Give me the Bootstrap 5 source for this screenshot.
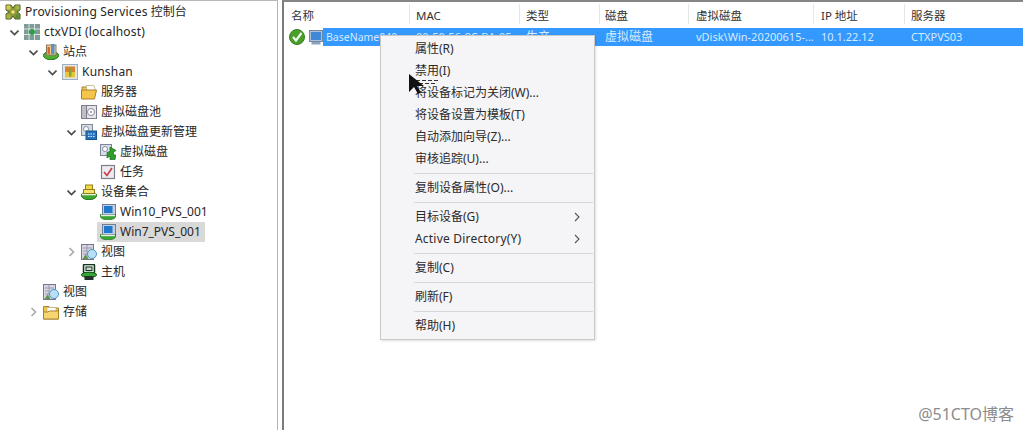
<!DOCTYPE html>
<html lang="zh-CN">
<head>
<meta charset="utf-8">
<title>Provisioning Services 控制台</title>
<link href="https://cdn.jsdelivr.net/npm/bootstrap@5.3.0/dist/css/bootstrap.min.css" rel="stylesheet">
<style>
html,body{height:430px;overflow:hidden;background:#fff}
body{font-family:"Noto Sans","Noto Sans CJK SC",sans-serif;font-size:12px;color:#262626;line-height:20px;position:relative}
.app-shell{height:430px}
.tree-pane{width:278px;border-right:1px solid #b4b4b4;border-top:1px solid #b8b8b8;padding-top:1px}
.split-gap{width:4px}
.detail-pane{flex:1;border-left:2px solid #7c7c7c;border-top:2px solid #868686;min-width:0}
.tree-row{height:20px}
.lat-text{letter-spacing:.2px}
.lv0{padding-left:5px}.lv1{padding-left:10px}.lv2{padding-left:29px}.lv3{padding-left:48px}.lv4{padding-left:67px}.lv5{padding-left:86px}
.tog{width:14px;height:20px;flex:none;padding-right:5px}
.tico{width:16px;height:16px;flex:none;margin-right:4px}
.sel-node{background:#d9d9d9;margin-left:-3px;padding:0 4px 0 3px;height:20px}
.head-row{height:24px;padding-top:2px;font-size:11.5px;color:#333}
.cell{flex:none;padding-left:6px;white-space:nowrap;overflow:hidden}
.head-row .cell{border-right:1px solid #e6e6e6;height:20px;line-height:24px}
.c1{width:126px;padding-left:7px}.c2{width:110px}.c3{width:80px}.c4{width:89px;padding-left:5px}.c5{width:125px;padding-left:7px}.c6{width:91px;padding-left:7px}.c7{width:118px}
.head-row .c7{border-right:0}
.data-row{height:18px;line-height:18px;margin-top:2px;font-size:11px}
.data-row .c1{padding:0;display:flex;align-items:center;overflow:visible}
.stat-ico{width:16px;height:16px;margin:0 4px 0 5px}
.dev-ico{width:14px;height:15px}
.row-name{background:#3399ff;color:#d7eaff;flex:1;height:18px;padding-left:3px;font-size:10.5px}
.blue-cell{background:#3399ff;color:#d7eaff;height:18px}
.cjk-cell{font-size:12px}
.ctx-menu{position:absolute;left:380px;top:35px;width:215px;margin:0;padding:2px 0 2px;background:#f5f4f6;border:1px solid #c9c9c9;border-radius:0;font-size:12px;color:#2b2b2b;display:block;min-width:0;box-shadow:1px 1px 2px rgba(0,0,0,.12)}
.ctx-menu .dropdown-item{height:22px;line-height:22px;padding:0 14px 0 34px;font-size:12px;color:#2b2b2b;background:transparent;display:flex;justify-content:space-between;align-items:center}
.ctx-menu .dropdown-divider{margin:3px 1px 3px 33px;border-top:1px solid #d7d7d7;opacity:1}
.sub-arrow{width:6px;height:10px}
.cursor-mark{position:absolute;left:408px;top:73px;width:34px;height:24px;pointer-events:none;z-index:1001}
.watermark{position:absolute;right:9px;top:403px;font-size:16px;line-height:22px;color:#8c8c8c;background:#fff;padding:0 0 0 1px}
</style>
</head>
<body>
<svg width="0" height="0" class="position-absolute">
<defs>
<symbol id="down" viewBox="0 0 9 20"><path d="M0.5 8.5 4.5 12.5 8.5 8.5" fill="none" stroke="#4a4a4a" stroke-width="1.6"/></symbol>
<symbol id="right" viewBox="0 0 9 20"><path d="M2.5 6 6.5 10 2.5 14" fill="none" stroke="#a8a8a8" stroke-width="1.6"/></symbol>
<symbol id="i-console" viewBox="0 0 16 16"><path d="M1 1h5l2 3 2-3h5v5l-3 2 3 2v5h-5l-2-3-2 3H1v-5l3-2-3-2z" fill="#8a9a3a" stroke="#4f5f22"/><circle cx="8" cy="8" r="1.8" fill="#f1e27a"/><rect x="1.5" y="1.5" width="4" height="4" fill="#d4cc5a"/><rect x="10.5" y="10.5" width="4" height="4" fill="#5f8a3a"/><rect x="10.5" y="1.5" width="4" height="4" fill="#a8b24a"/><rect x="1.5" y="10.5" width="4" height="4" fill="#a8b24a"/></symbol>
<symbol id="i-farm" viewBox="0 0 16 16"><rect x="0" y="0" width="16" height="16" fill="#7f9c98"/><path d="M0 5h16M0 10.500h16M5 0v16M10.500 0v16" stroke="#d8e2e0"/><path d="M5 8h6M8 5v6" stroke="#2f9e4a" stroke-width="3"/></symbol>
<symbol id="i-site" viewBox="0 0 16 16"><ellipse cx="8" cy="11.500" rx="7.700" ry="4.200" fill="#4fae32" stroke="#2c7a1e"/><rect x="3.500" y="1" width="9.500" height="10" fill="#ecd08a" stroke="#8b7a5a"/><rect x="4.500" y="3" width="2.500" height="7" fill="#d9662e"/><rect x="8" y="0" width="3.500" height="10" fill="#5a8fd0"/></symbol>
<symbol id="i-local" viewBox="0 0 16 16"><rect x="0.500" y="0.500" width="15" height="15" fill="#dfe6ec" stroke="#9fb0bc"/><rect x="3" y="2.500" width="10" height="5.500" fill="#d9822e"/><rect x="3" y="8" width="10" height="5.500" fill="#e7c63c"/><rect x="7" y="4.500" width="2.500" height="8" fill="#7fa83c"/></symbol>
<symbol id="i-folder" viewBox="0 0 16 16"><path d="M1 3h5l1 1.500h5V7H1z" fill="#f0c860" stroke="#a8822a"/><path d="M5 1.500h8l1.500 5H6z" fill="#fff" stroke="#b8a878" stroke-width=".7"/><path d="M0.500 15V6h15l-2 9z" fill="#f4c548" stroke="#a8822a"/></symbol>
<symbol id="i-pool" viewBox="0 0 16 16"><rect x="0.500" y="1.500" width="15" height="13" fill="#e4e4ea" stroke="#7f7f8c"/><rect x="0.500" y="1.500" width="5" height="13" fill="#bcbcca" stroke="#7f7f8c"/><circle cx="10" cy="8" r="3.500" fill="#fff" stroke="#8a8a98"/><circle cx="10" cy="8" r="1" fill="#8a8a98"/></symbol>
<symbol id="i-update" viewBox="0 0 16 16"><rect x="0.500" y="0.500" width="11" height="11" fill="#d5dbe4" stroke="#7f8a98"/><circle cx="5" cy="5" r="2.500" fill="#fff" stroke="#8a96a0"/><rect x="5" y="7" width="10.500" height="8.500" fill="#2373c0" stroke="#1a5390"/><path d="M7 10h7M7 12.500h7" stroke="#dfeaf5" stroke-dasharray="1.500 1"/></symbol>
<symbol id="i-vdisk" viewBox="0 0 16 16"><rect x="0.500" y="0.500" width="11" height="11" fill="#d8dce6" stroke="#7f8598"/><circle cx="5" cy="5" r="2.500" fill="#fff" stroke="#8a90a0"/><path d="M10 3l6 3.500-2.500 1.500v3H16l-1 4.500h-5v-3.500L7 14V8.500l3-1z" fill="#2f9e2e" stroke="#166e18" stroke-width=".7"/></symbol>
<symbol id="i-task" viewBox="0 0 16 16"><rect x="1.500" y="1.500" width="13" height="13" fill="#ececf0" stroke="#7f7f88" stroke-width="1.200"/><path d="M4 8l3 3.500L12 4" fill="none" stroke="#c8384a" stroke-width="1.600"/></symbol>
<symbol id="i-coll" viewBox="0 0 16 16"><ellipse cx="8" cy="11.500" rx="7.700" ry="4.200" fill="#3fa52e" stroke="#24761f"/><rect x="1" y="9.500" width="14" height="1.800" fill="#e3eed8"/><rect x="4.500" y="1" width="7" height="5.500" fill="#f2d93f" stroke="#8f7f22"/><rect x="2.500" y="5.500" width="11" height="4" fill="#f6e46a" stroke="#8f7f22"/></symbol>
<symbol id="i-dev" viewBox="0 0 16 16"><rect x="2.500" y="0.500" width="13" height="10.500" fill="#c3cede" stroke="#6f7e96"/><rect x="4" y="2" width="8.500" height="7" fill="#2277cf"/><path d="M0.300 10.500c2 1 13 1 15.400 0v1.500c0 2.500-3.500 3.800-7.700 3.800S0.300 14.500 0.300 12z" fill="#37a632" stroke="#1f6e1c" stroke-width=".7"/><rect x="1" y="10.800" width="14" height="1.400" fill="#e6f0e2"/></symbol>
<symbol id="i-view" viewBox="0 0 16 16"><rect x="0.500" y="0.500" width="12" height="15" fill="#d6d6e2" stroke="#75758c"/><path d="M2 4h9M2 7h4M2 10h4M6 1v14" stroke="#9a9ab0"/><path d="M1.500 15l3-4.500 3 4.500z" fill="#5f9440"/><circle cx="11" cy="10" r="4.500" fill="#b8dff5" stroke="#4c95c2"/></symbol>
<symbol id="i-host" viewBox="0 0 16 16"><rect x="2.500" y="0.500" width="11" height="8.500" rx="1" fill="#e8efe8" stroke="#12331c" stroke-width="1.500"/><rect x="5" y="3" width="6" height="3.500" fill="#cfd8cf" stroke="#12331c"/><ellipse cx="8" cy="10.800" rx="7.700" ry="2.600" fill="#36a634" stroke="#15551c"/><rect x="3.500" y="12" width="9" height="4" fill="#20302a"/></symbol>
<symbol id="i-store" viewBox="0 0 16 16"><path d="M0.500 15V2.500h5.500l1 1.500h8.500v11z" fill="#f2c748" stroke="#a8822a"/><path d="M4 3.500h9v5H4z" fill="#fff" stroke="#b8a878" stroke-width=".7"/><path d="M0.500 15V8h4l2-1h9v8z" fill="#f6d670" stroke="#a8822a"/></symbol>
<symbol id="i-ok" viewBox="0 0 16 16"><circle cx="8" cy="8" r="7.500" fill="#4a9f2a" stroke="#357f20"/><path d="M4 8l3 3.500L12.500 4" fill="none" stroke="#f2f7ee" stroke-width="2.200"/></symbol>
<symbol id="i-mon" viewBox="0 0 14 15"><rect x="0.500" y="0.500" width="13" height="11" fill="#aebfd6" stroke="#6f88a8"/><rect x="2" y="2" width="10" height="8" fill="#3f88d8"/><rect x="2.500" y="12" width="9" height="2.500" fill="#8aa2c0"/></symbol>
</defs>
</svg>

<div class="app-shell d-flex">
  <nav class="tree-pane flex-none">
    <div class="tree-row d-flex align-items-center lv0"><svg class="tico"><use href="#i-console"/></svg><span><span class="lat-text">Provisioning Services</span> 控制台</span></div>
    <div class="tree-row d-flex align-items-center lv1"><svg class="tog"><use href="#down"/></svg><svg class="tico"><use href="#i-farm"/></svg><span class="lat-text">ctxVDI (localhost)</span></div>
    <div class="tree-row d-flex align-items-center lv2"><svg class="tog"><use href="#down"/></svg><svg class="tico"><use href="#i-site"/></svg><span>站点</span></div>
    <div class="tree-row d-flex align-items-center lv3"><svg class="tog"><use href="#down"/></svg><svg class="tico"><use href="#i-local"/></svg><span class="lat-text">Kunshan</span></div>
    <div class="tree-row d-flex align-items-center lv4"><span class="tog"></span><svg class="tico"><use href="#i-folder"/></svg><span>服务器</span></div>
    <div class="tree-row d-flex align-items-center lv4"><span class="tog"></span><svg class="tico"><use href="#i-pool"/></svg><span>虚拟磁盘池</span></div>
    <div class="tree-row d-flex align-items-center lv4"><svg class="tog"><use href="#down"/></svg><svg class="tico"><use href="#i-update"/></svg><span>虚拟磁盘更新管理</span></div>
    <div class="tree-row d-flex align-items-center lv5"><span class="tog"></span><svg class="tico"><use href="#i-vdisk"/></svg><span>虚拟磁盘</span></div>
    <div class="tree-row d-flex align-items-center lv5"><span class="tog"></span><svg class="tico"><use href="#i-task"/></svg><span>任务</span></div>
    <div class="tree-row d-flex align-items-center lv4"><svg class="tog"><use href="#down"/></svg><svg class="tico"><use href="#i-coll"/></svg><span>设备集合</span></div>
    <div class="tree-row d-flex align-items-center lv5"><span class="tog"></span><svg class="tico"><use href="#i-dev"/></svg><span>Win10_PVS_001</span></div>
    <div class="tree-row d-flex align-items-center lv5"><span class="tog"></span><span class="sel-node d-flex align-items-center"><svg class="tico"><use href="#i-dev"/></svg><span>Win7_PVS_001</span></span></div>
    <div class="tree-row d-flex align-items-center lv4"><svg class="tog"><use href="#right"/></svg><svg class="tico"><use href="#i-view"/></svg><span>视图</span></div>
    <div class="tree-row d-flex align-items-center lv4"><span class="tog"></span><svg class="tico"><use href="#i-host"/></svg><span>主机</span></div>
    <div class="tree-row d-flex align-items-center lv2"><span class="tog"></span><svg class="tico"><use href="#i-view"/></svg><span>视图</span></div>
    <div class="tree-row d-flex align-items-center lv2"><svg class="tog"><use href="#right"/></svg><svg class="tico"><use href="#i-store"/></svg><span>存储</span></div>
  </nav>
  <div class="split-gap"></div>
  <main class="detail-pane">
    <div class="head-row d-flex">
      <div class="cell c1">名称</div><div class="cell c2">MAC</div><div class="cell c3">类型</div><div class="cell c4">磁盘</div><div class="cell c5">虚拟磁盘</div><div class="cell c6">IP 地址</div><div class="cell c7">服务器</div>
    </div>
    <div class="data-row d-flex">
      <div class="cell c1"><svg class="stat-ico"><use href="#i-ok"/></svg><svg class="dev-ico"><use href="#i-mon"/></svg><span class="row-name">BaseName040</span></div>
      <div class="cell c2 blue-cell">00-50-56-8C-BA-05</div>
      <div class="cell c3 blue-cell cjk-cell">生产</div>
      <div class="cell c4 blue-cell cjk-cell">虚拟磁盘</div>
      <div class="cell c5 blue-cell">vDisk\Win-20200615-...</div>
      <div class="cell c6 blue-cell">10.1.22.12</div>
      <div class="cell c7 blue-cell">CTXPVS03</div>
    </div>
  </main>
</div>

<div class="dropdown-menu ctx-menu">
  <a class="dropdown-item" href="#">属性(R)</a>
  <a class="dropdown-item" href="#">禁用(I)</a>
  <a class="dropdown-item" href="#">将设备标记为关闭(W)...</a>
  <a class="dropdown-item" href="#">将设备设置为模板(T)</a>
  <a class="dropdown-item" href="#">自动添加向导(Z)...</a>
  <a class="dropdown-item" href="#">审核追踪(U)...</a>
  <hr class="dropdown-divider">
  <a class="dropdown-item" href="#">复制设备属性(O)...</a>
  <hr class="dropdown-divider">
  <a class="dropdown-item" href="#"><span>目标设备(G)</span><svg class="sub-arrow" viewBox="0 0 6 10"><path d="M1 1l4 4-4 4" fill="none" stroke="#555" stroke-width="1.1"/></svg></a>
  <a class="dropdown-item" href="#"><span class="lat-text">Active Directory(Y)</span><svg class="sub-arrow" viewBox="0 0 6 10"><path d="M1 1l4 4-4 4" fill="none" stroke="#555" stroke-width="1.1"/></svg></a>
  <hr class="dropdown-divider">
  <a class="dropdown-item" href="#">复制(C)</a>
  <hr class="dropdown-divider">
  <a class="dropdown-item" href="#">刷新(F)</a>
  <hr class="dropdown-divider">
  <a class="dropdown-item" href="#">帮助(H)</a>
</div>

<svg class="cursor-mark" viewBox="0 0 34 24">
  <path d="M7 6h26v5H7z" fill="#f5f4f6"/>
  <path d="M8 7.500h24M11 10.500h18" stroke="#333" stroke-dasharray="4 2" fill="none"/>
  <path d="M1 1v18l5-5 4 7 3-1.500-4-6.500h7z" fill="#111"/>
</svg>

<div class="watermark">@51CTO博客</div>
</body>
</html>
